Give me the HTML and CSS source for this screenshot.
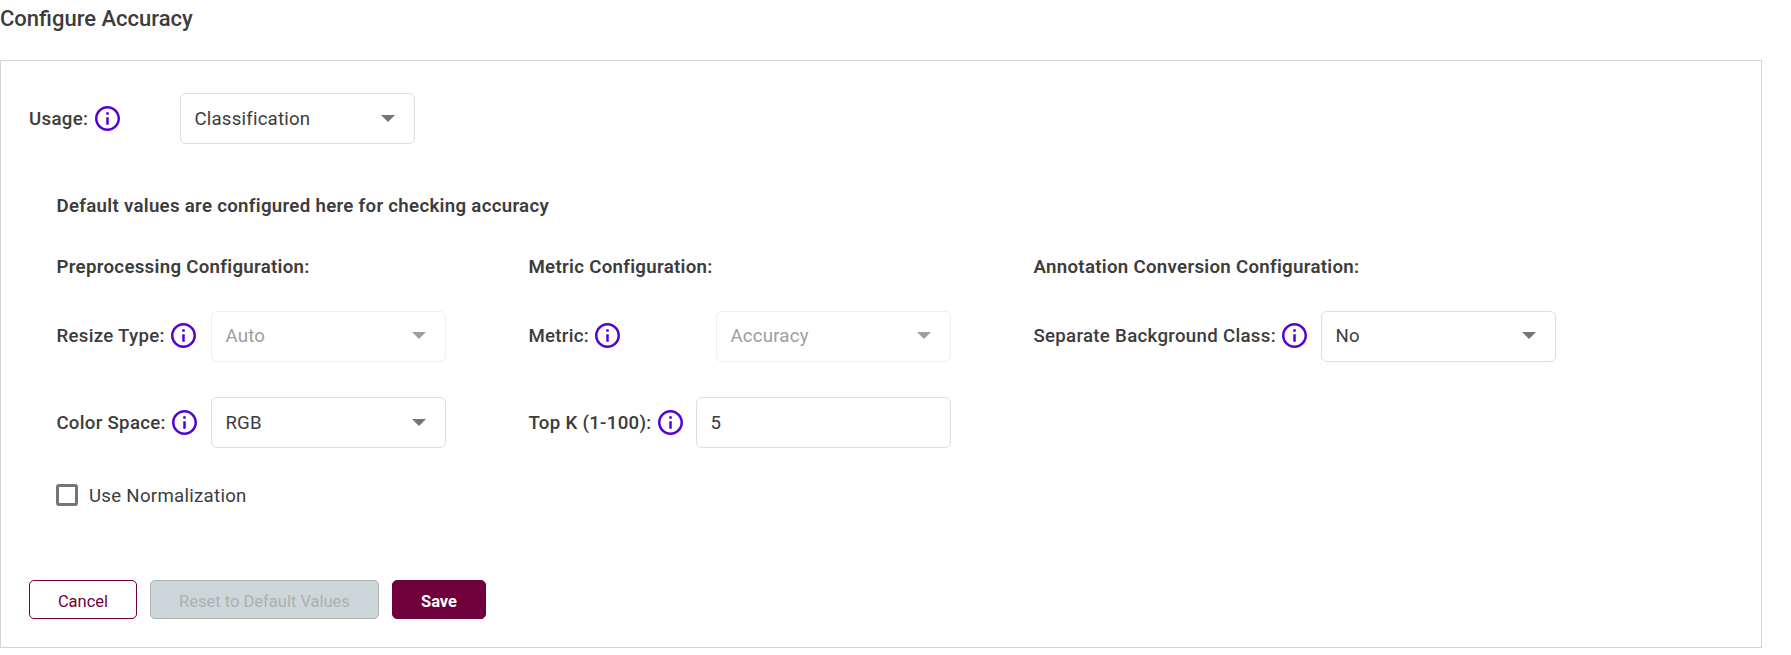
FILE: index.html
```html
<!DOCTYPE html>
<html lang="en">
<head>
<meta charset="utf-8">
<title>Configure Accuracy</title>
<link rel="stylesheet" href="styles.css">
</head>
<body>
<svg width="0" height="0" class="defs" aria-hidden="true">
  <symbol id="info" viewBox="2 2 20 20"><path d="M11 7h2v2h-2zm0 4h2v6h-2zm1-9C6.480 2 2 6.480 2 12s4.480 10 10 10 10-4.480 10-10S17.520 2 12 2zm0 18c-4.410 0-8-3.590-8-8s3.590-8 8-8 8 3.590 8 8-3.590 8-8 8z"/></symbol>
</svg>
<h1 class="title"><span>Configure Accuracy</span></h1>
<main class="panel">
  <div class="field usage">
    <label class="label"><span>Usage:</span></label><svg class="info"><use href="#info"/></svg>
    <div class="select"><span>Classification</span><i class="arrow"></i></div>
  </div>
  <section class="config">
    <h2 class="heading"><span>Default values are configured here for checking accuracy</span></h2>
    <div class="columns">
      <div class="column preprocessing">
        <h3 class="heading"><span>Preprocessing Configuration:</span></h3>
        <div class="field first">
          <label class="label"><span>Resize Type:</span></label><svg class="info"><use href="#info"/></svg>
          <div class="select disabled"><span>Auto</span><i class="arrow"></i></div>
        </div>
        <div class="field">
          <label class="label"><span>Color Space:</span></label><svg class="info"><use href="#info"/></svg>
          <div class="select"><span>RGB</span><i class="arrow"></i></div>
        </div>
        <label class="check"><i class="box"></i><span class="check-text">Use Normalization</span></label>
      </div>
      <div class="column metric">
        <h3 class="heading"><span>Metric Configuration:</span></h3>
        <div class="field first">
          <label class="label"><span>Metric:</span></label><svg class="info"><use href="#info"/></svg>
          <div class="select disabled"><span>Accuracy</span><i class="arrow"></i></div>
        </div>
        <div class="field">
          <label class="label"><span>Top K (1-100):</span></label><svg class="info"><use href="#info"/></svg>
          <div class="select wide"><span>5</span></div>
        </div>
      </div>
      <div class="column annotation">
        <h3 class="heading"><span>Annotation Conversion Configuration:</span></h3>
        <div class="field first">
          <label class="label"><span>Separate Background Class:</span></label><svg class="info"><use href="#info"/></svg>
          <div class="select"><span>No</span><i class="arrow"></i></div>
        </div>
      </div>
    </div>
  </section>
  <div class="actions">
    <button class="btn cancel"><span>Cancel</span></button>
    <button class="btn reset" disabled><span>Reset to Default Values</span></button>
    <button class="btn save"><span>Save</span></button>
  </div>
</main>
</body>
</html>
```
FILE: styles.css
```css
* { box-sizing: border-box; }
body {
  margin: 0;
  background: #fff;
  color: #3c3c3c;
  font-family: Roboto, sans-serif;
  font-size: 18.67px;
  line-height: 28px;
  letter-spacing: .3px;
  overflow: hidden;
}
.defs { display: block; }
.title {
  margin: 0;
  height: 60px;
  padding-top: 5px;
  font-size: 22px;
  font-weight: 500;
  letter-spacing: 0;
}
.panel {
  width: 1762px;
  height: 588px;
  padding: 32px 28px 0;
  border: 1px solid #cfd6d8;
}
.field { display: flex; align-items: center; height: 51px; }
.usage { width: 386px; }
.label { font-weight: 500; }
.info { width: 25px; height: 25px; margin-left: 6.5px; flex: none; fill: #5400d6; }
.select {
  display: flex;
  align-items: center;
  justify-content: space-between;
  width: 235px;
  height: 51px;
  margin-left: auto;
  padding: 0 19px 0 13.4px;
  border: 1px solid #dedede;
  border-radius: 6px;
  letter-spacing: .2px;
}
.wide { width: 255px; }
.first .label, .first .info { margin-bottom: 2px; }
.first .select { padding-bottom: 2px; }
.arrow {
  border: 7px solid transparent;
  border-top-color: #757575;
  border-bottom: 0;
}
.disabled { color: #9e9e9e; border-color: #efefef; }
.disabled .arrow { border-top-color: #9e9e9e; }
.config { padding: 48px 27px 0; }
.heading { margin: 0; padding-left: .5px; font-size: 18.67px; line-height: 28px; font-weight: 600; }
.columns {
  display: grid;
  grid-template-columns: 390px 423px 523px;
  column-gap: 82px;
  margin-top: 33px;
}
.column { display: flex; flex-direction: column; }
.column .field { margin-top: 30px; }
.column .label { padding-left: .4px; }
.column .info { margin-left: 6.2px; }
.column .field + .field { margin-top: 35px; }
.check { display: flex; align-items: center; gap: 11px; height: 28px; margin-top: 33px; }
.check-text { padding-top: 1px; letter-spacing: .27px; }
.box { width: 22px; height: 22px; border: 3px solid #757575; border-radius: 3px; }
.actions { display: flex; gap: 13px; margin-top: 71px; }
.btn {
  height: 39px;
  padding: 4px 0 0;
  border: 1px solid #6f003c;
  border-radius: 5px;
  background: #fff;
  color: #6f003c;
  font: 400 16.5px/24px Roboto, sans-serif;
}
.cancel { width: 108px; }
.reset { width: 229px; background: #cfd6d9; border-color: #abb0b1; color: #abb0b1; }
.save { width: 94px; background: #6f003c; color: #fff; font-weight: 700; }
```
